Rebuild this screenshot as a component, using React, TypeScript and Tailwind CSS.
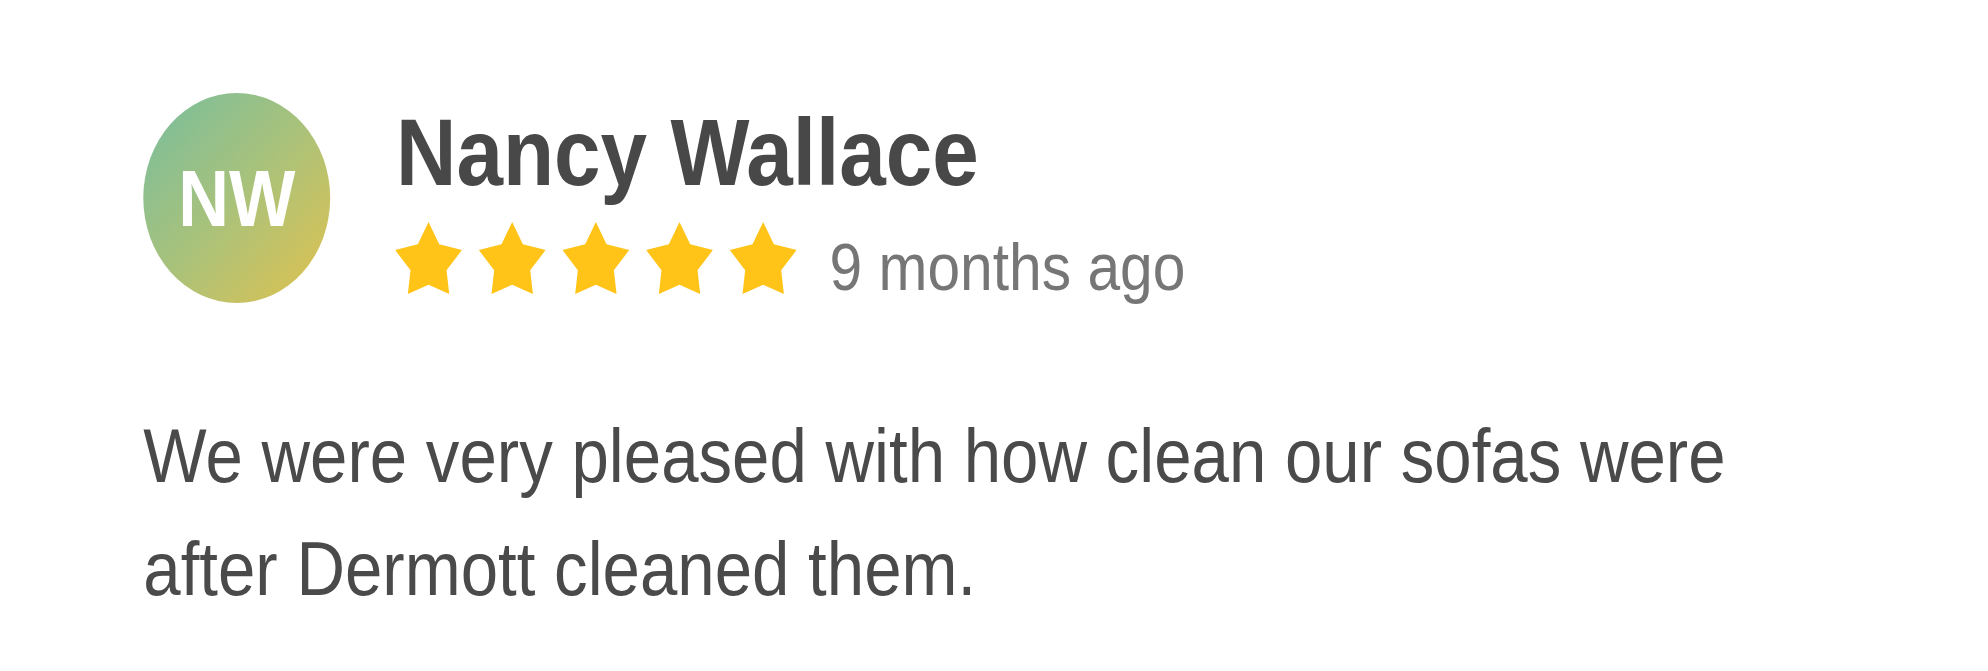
import React from 'react';

function Star() {
  return (
    <svg viewBox="0 0 100 100" preserveAspectRatio="none" className="w-[75px] h-[72px] shrink-0" aria-hidden="true">
      <polygon
        fill="#ffc417"
        points="50,0 66,31 100,39 77,67 81,100 50,87 19,100 23,67 0,39 34,31"
      />
    </svg>
  );
}

export default function App() {
  const rating = 5;
  return (
    <div className="w-full h-[671px] overflow-hidden bg-white">
      {/* the capture is squeezed horizontally, so the card is drawn at full width and narrowed */}
      <div
        className="w-[2234px] origin-top-left scale-x-[0.89] pt-[93px] pl-[161px] text-[#4a4a4a]"
        style={{ fontFamily: '"Liberation Sans", Arial, sans-serif' }}
      >
        <div className="flex items-start">
          <div className="w-[210px] h-[210px] shrink-0 rounded-full bg-linear-to-br from-[#74bd9d] via-[#a9c27a] to-[#e0c148] flex items-center justify-center">
            <span className="text-white font-bold text-[79px] leading-none">NW</span>
          </div>
          <div className="ml-[73px] pt-[13px]">
            <h2 className="text-[94px] leading-none font-bold text-[#484848] ml-[1px]">Nancy Wallace</h2>
            <div className="mt-[22px] flex items-end">
              <div className="flex gap-[19px]">
                {Array.from({ length: rating }).map((_, i) => (
                  <Star key={i} />
                ))}
              </div>
              <span className="ml-[37px] text-[66px] leading-[54px] text-[#767676]">9 months ago</span>
            </div>
          </div>
        </div>
        <p className="mt-[97px] max-w-[1840px] text-[75.5px] leading-[113px] text-[#4a4a4a]">
          We were very pleased with how clean our sofas were after Dermott cleaned them.
        </p>
      </div>
    </div>
  );
}
